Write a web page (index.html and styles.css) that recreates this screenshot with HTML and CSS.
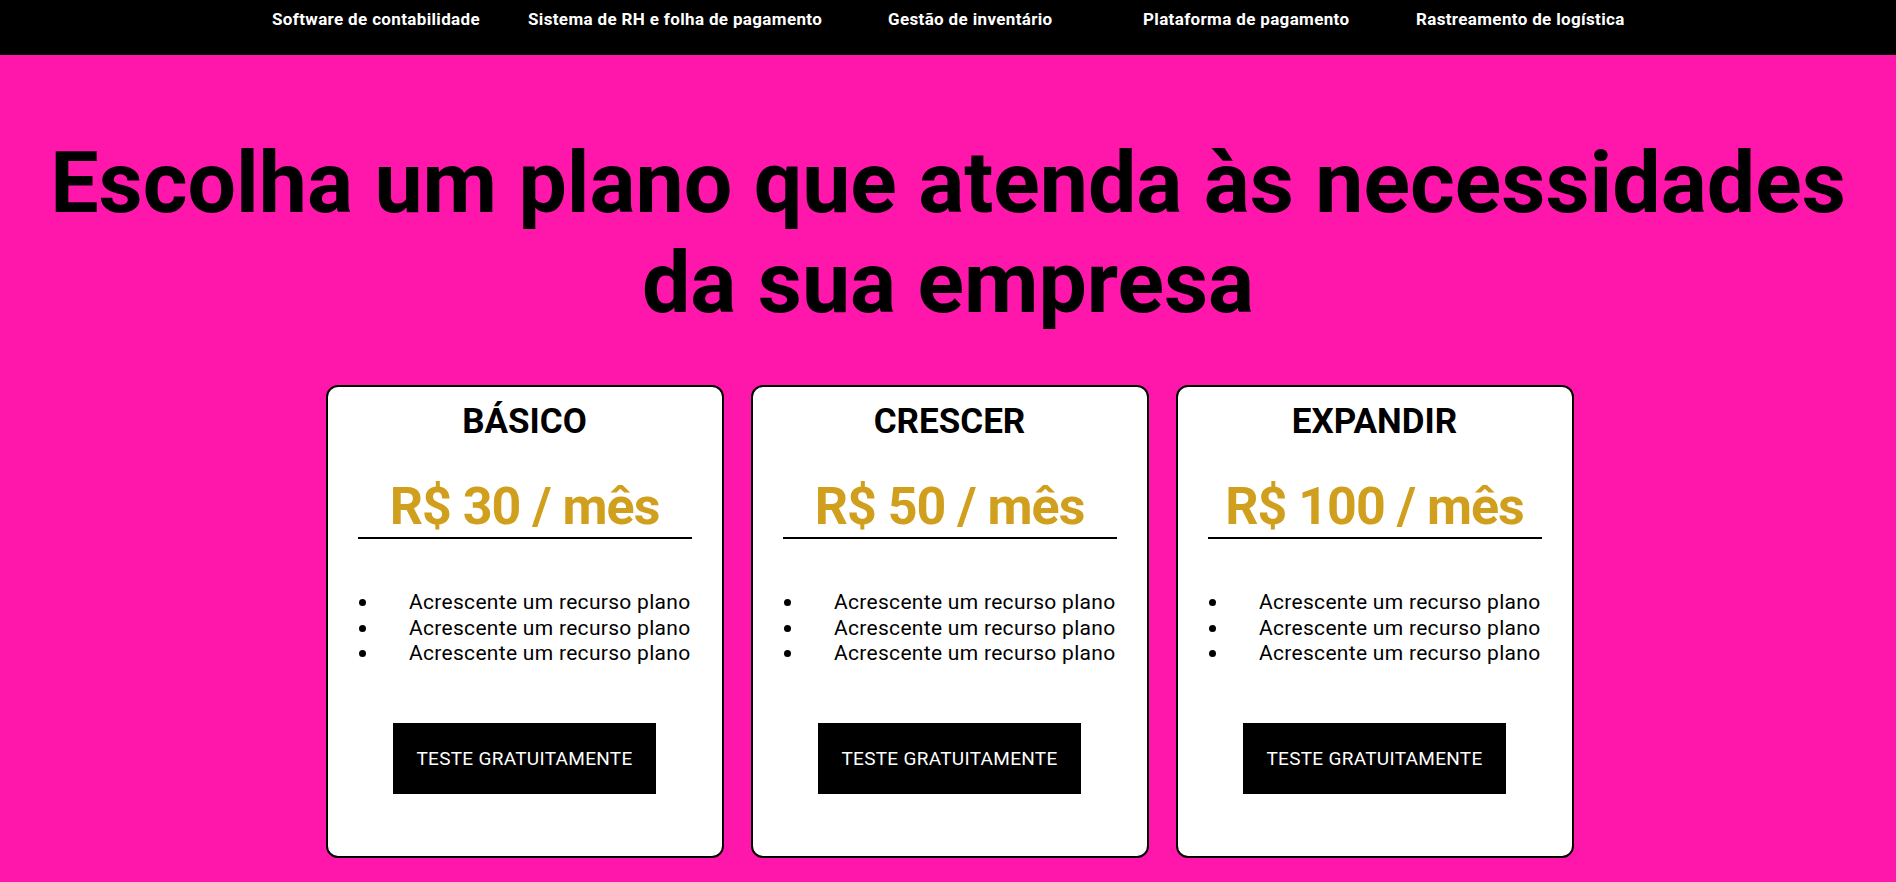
FILE: index.html
```html
<!DOCTYPE html>
<html lang="pt-BR">
<head>
<meta charset="utf-8">
<title>Planos</title>
<link rel="stylesheet" href="styles.css">
</head>
<body>
<nav class="topnav">
  <a class="nav-link" href="#">Software de contabilidade</a>
  <a class="nav-link" href="#">Sistema de RH e folha de pagamento</a>
  <a class="nav-link" href="#">Gestão de inventário</a>
  <a class="nav-link" href="#">Plataforma de pagamento</a>
  <a class="nav-link" href="#">Rastreamento de logística</a>
</nav>
<main class="pricing">
  <h1 class="headline">Escolha um plano que atenda às necessidades da sua empresa</h1>
  <div class="cards">
    <section class="card">
      <h2 class="card-title">BÁSICO</h2>
      <div class="price">R$ 30 / mês</div>
      <ul class="features">
        <li>Acrescente um recurso plano</li>
        <li>Acrescente um recurso plano</li>
        <li>Acrescente um recurso plano</li>
      </ul>
      <a class="cta" href="#">TESTE GRATUITAMENTE</a>
    </section>
    <section class="card">
      <h2 class="card-title">CRESCER</h2>
      <div class="price">R$ 50 / mês</div>
      <ul class="features">
        <li>Acrescente um recurso plano</li>
        <li>Acrescente um recurso plano</li>
        <li>Acrescente um recurso plano</li>
      </ul>
      <a class="cta" href="#">TESTE GRATUITAMENTE</a>
    </section>
    <section class="card">
      <h2 class="card-title">EXPANDIR</h2>
      <div class="price">R$ 100 / mês</div>
      <ul class="features">
        <li>Acrescente um recurso plano</li>
        <li>Acrescente um recurso plano</li>
        <li>Acrescente um recurso plano</li>
      </ul>
      <a class="cta" href="#">TESTE GRATUITAMENTE</a>
    </section>
  </div>
</main>
</body>
</html>
```
FILE: styles.css
```css
* { box-sizing: border-box; }

body {
  margin: 0;
  background: #ff17ac;
  font-family: Roboto, "Liberation Sans", sans-serif;
  color: #000;
}

.topnav {
  height: 55px;
  background: #000;
  display: grid;
  grid-template-columns: 256px 360px 255px 273px auto;
  padding-left: 272px;
  padding-top: 9px;
  align-items: start;
}

.nav-link {
  color: #fff;
  text-decoration: none;
  font-weight: 700;
  font-size: 17px;
  letter-spacing: 0.35px;
  line-height: 20px;
  white-space: nowrap;
}

.pricing {
  display: flex;
  flex-direction: column;
  align-items: center;
  padding-top: 78px;
}

.headline {
  margin: 0;
  font-size: 86px;
  line-height: 100px;
  font-weight: 700;
  text-align: center;
  max-width: 1820px;
}

.cards {
  display: flex;
  gap: 27px;
  margin-top: 52px;
  margin-left: 3px;
}

.card {
  width: 398px;
  background: #fff;
  border: 2px solid #000;
  border-radius: 12px;
  padding: 13px 0 62px;
  display: flex;
  flex-direction: column;
  align-items: stretch;
}

.card-title {
  margin: 0;
  text-align: center;
  font-size: 35px;
  line-height: 44px;
  font-weight: 700;
}

.price {
  margin: 33px 30px 0;
  text-align: center;
  font-size: 52px;
  letter-spacing: -1px;
  line-height: 60px;
  font-weight: 700;
  color: #d09f1e;
  border-bottom: 2px solid #000;
  height: 62px;
}

.features {
  list-style: none;
  margin: 51px 31px 0;
  padding: 0;
  font-size: 21px;
  letter-spacing: 0.3px;
  line-height: 25.5px;
}

.features li {
  display: flex;
  align-items: center;
  justify-content: space-between;
}

.features li::before {
  content: "";
  width: 7px;
  height: 7px;
  border-radius: 50%;
  background: #000;
}

.cta {
  align-self: center;
  margin-top: 56px;
  width: 263px;
  height: 71px;
  background: #000;
  color: #fff;
  text-decoration: none;
  display: flex;
  align-items: center;
  justify-content: center;
  font-size: 19px;
  letter-spacing: 0.3px;
}
```
